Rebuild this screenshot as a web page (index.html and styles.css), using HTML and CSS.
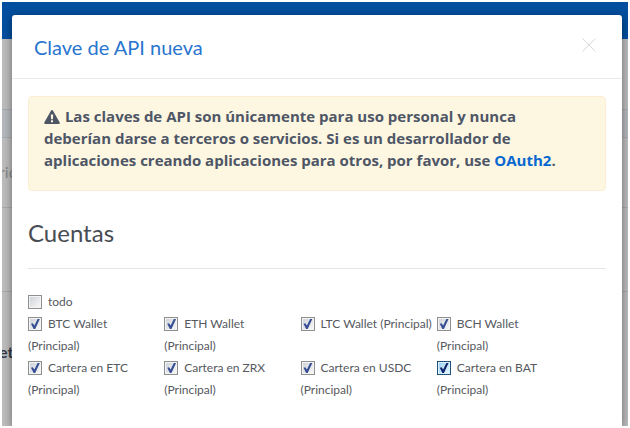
FILE: index.html
```html
<!DOCTYPE html>
<html lang="es">
<head>
<meta charset="utf-8">
<title>Clave de API nueva</title>
<link rel="stylesheet" href="styles.css">
</head>
<body>
<div class="stage">
  <div class="page">
    <div class="topbar"></div>
    <div class="page-title"></div>
    <div class="tabs"></div>
    <div class="row"><span>ric</span></div>
    <div class="row row-tall"></div>
    <div class="row row-last"><strong>et</strong></div>
  </div>
  <section class="modal" role="dialog" aria-labelledby="title">
    <header class="modal-head">
      <h1 id="title">Clave de API nueva</h1>
      <button class="close" type="button" aria-label="Cerrar">
        <svg width="14" height="14" viewBox="0 0 14 14"><path d="M.5 .5l13 13M13.5 .5l-13 13"/></svg>
      </button>
    </header>
    <div class="modal-body">
      <div class="alert">
        <svg class="warn" width="16" height="14" viewBox="0 0 16 14"><path fill-rule="evenodd" d="M8 0c.4 0 .7.2.9.5l6.8 12c.4.7 0 1.5-.9 1.5H1.200c-.9 0-1.300-.8-.9-1.500l6.800-12C7.300.2 7.600 0 8 0zM6.800 4.500l.3 4.800h1.800l.3-4.800zM7 10.300v1.900h2v-1.900z"/></svg>
        Las claves de API son únicamente para uso personal y nunca<br>deberían darse a terceros o servicios. Si es un desarrollador de<br>aplicaciones creando aplicaciones para otros, por favor, use <a href="#">OAuth2</a>.
      </div>
      <h2>Cuentas</h2>
      <form class="accounts">
        <label class="all"><input type="checkbox">todo</label>
        <label><input type="checkbox" checked>BTC Wallet<br>(Principal)</label>
        <label><input type="checkbox" checked>ETH Wallet<br>(Principal)</label>
        <label><input type="checkbox" checked>LTC Wallet (Principal)</label>
        <label><input type="checkbox" checked>BCH Wallet<br>(Principal)</label>
        <label><input type="checkbox" checked>Cartera en ETC<br>(Principal)</label>
        <label><input type="checkbox" checked>Cartera en ZRX<br>(Principal)</label>
        <label><input type="checkbox" checked>Cartera en USDC<br>(Principal)</label>
        <label><input class="current" type="checkbox" checked>Cartera en BAT<br>(Principal)</label>
      </form>
    </div>
  </section>
</div>
</body>
</html>
```
FILE: styles.css
```css
* { box-sizing: border-box; }
body {
  margin: 0;
  padding: 2px;
  height: 100vh;
  background: #fff;
  color: #4e5c6e;
  font-family: Lato, "Liberation Sans", sans-serif;
}
.stage {
  display: grid;
  height: 100%;
  overflow: hidden;
}
.page, .modal { grid-area: 1 / 1; }
.page {
  display: flex;
  flex-direction: column;
  background: #bcbcbc;
}
.topbar { height: 37px; background: #024f9f; }
.page-title { height: 70px; }
.tabs {
  height: 29px;
  background: #b5b8bc;
  border: solid #a5abb3;
  border-width: 1px 0;
}
.row {
  height: 70px;
  padding-top: 22px;
  border-bottom: 1px solid #aaa;
  color: #888;
  font-size: 16px;
  line-height: 24px;
}
.row span, .row strong { display: block; margin-left: -3px; }
.row-tall { height: 84px; }
.row-last {
  flex: 1;
  padding-top: 48px;
  border: 0;
  color: #303945;
}
.modal {
  z-index: 1;
  margin: 13px 6px 0 10px;
  background: #fff;
  border-radius: 3px 3px 0 0;
  box-shadow: 0 2px 8px rgba(0, 0, 0, .45);
}
.modal-head {
  display: flex;
  justify-content: space-between;
  align-items: center;
  height: 64px;
  padding: 0 22px;
  border-bottom: 1px solid #ebebeb;
}
h1 {
  margin: 0;
  color: #2975cf;
  font-size: 20px;
  font-weight: 400;
}
.close {
  display: flex;
  padding: 0 4px 4px;
  border: 0;
  background: none;
}
.close svg { stroke: #d6d8da; fill: none; }
.modal-body { padding: 17px 16px; }
.alert {
  padding: 8px 15px 19px;
  border: 1px solid #fbeed5;
  border-radius: 4px;
  background: #fdf7e2;
  color: #4e5666;
  font-family: "Open Sans", Lato, sans-serif;
  font-size: 15px;
  font-weight: 700;
  line-height: 22px;
  white-space: nowrap;
}
.warn { fill: currentColor; vertical-align: -2px; margin-right: 1px; }
a { color: #0667d0; text-decoration: none; }
h2 {
  margin: 28px 0 22px;
  padding-bottom: 21px;
  border-bottom: 1px solid #e5e5e5;
  color: #484c54;
  font-size: 24px;
  font-weight: 400;
  line-height: 28px;
}
.accounts {
  display: grid;
  grid-template-columns: repeat(4, 1fr);
  padding-right: 33px;
  font-size: 12px;
  line-height: 22px;
  color: #565960;
  white-space: nowrap;
}
.all { grid-column: 1 / -1; }
input {
  appearance: none;
  width: 14px;
  height: 14px;
  margin: 0 6px 0 0;
  border: 1px solid #8e8f8f;
  background: linear-gradient(135deg, #d0d4da, #f6f6f6) content-box, #f4f4f4;
  padding: 1px;
  vertical-align: -3px;
}
input:checked::before {
  content: "";
  display: block;
  width: 10px;
  height: 10px;
  background: #364f94;
  clip-path: polygon(10% 48%, 28% 42%, 44% 66%, 76% 0, 98% 0, 52% 100%, 36% 100%);
}
input.current {
  border-color: #2c628b;
  background: linear-gradient(135deg, #9fd3f3, #e4f5fd) content-box, #d5effc;
  outline: 1px dotted #1c4668;
  outline-offset: -1px;
}
input.current:checked::before { background: #10256b; }
```
